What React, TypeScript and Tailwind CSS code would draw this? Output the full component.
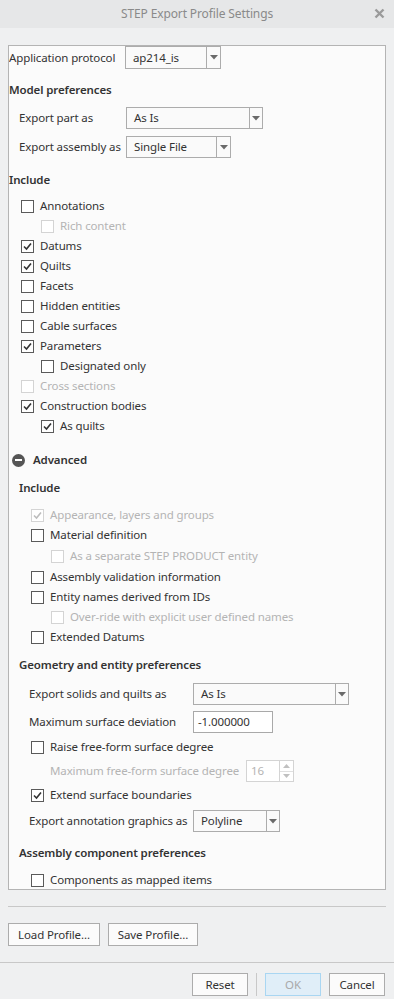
import React from "react";

const Arrow = () => (
  <svg width="8" height="5" viewBox="0 0 8 5">
    <path d="M0 0 H8 L4 4.5 Z" fill="#6a6a6a" />
  </svg>
);

function Select({ value, w, divider }: { value: string; w: number; divider: number }) {
  return (
    <div
      className="flex h-[22px] shrink-0 border border-[#acacac] bg-[#fafafa] text-[#333]"
      style={{ width: w }}
    >
      <div className="flex items-center pl-[7px]" style={{ width: divider }}>
        {value}
      </div>
      <div className="flex flex-1 items-center justify-center border-l border-[#acacac]">
        <Arrow />
      </div>
    </div>
  );
}

function Check({ checked, disabled }: { checked?: boolean; disabled?: boolean }) {
  return (
    <div
      className={
        "flex h-[13px] w-[13px] shrink-0 items-center justify-center border bg-white " +
        (disabled ? "border-[#d4d4d4]" : "border-[#5a5a5a]")
      }
    >
      {checked && (
        <svg width="11" height="11" viewBox="0 0 11 11">
          <path
            d="M2 5.5 L4.5 8 L9 2.5"
            fill="none"
            stroke={disabled ? "#bdbdbd" : "#333"}
            strokeWidth="1.6"
          />
        </svg>
      )}
    </div>
  );
}

function CRow({
  label,
  x,
  checked,
  disabled,
  h = 20,
}: {
  label: string;
  x: number;
  checked?: boolean;
  disabled?: boolean;
  h?: number;
}) {
  return (
    <div className="flex items-center whitespace-nowrap" style={{ height: h, paddingLeft: x }}>
      <Check checked={checked} disabled={disabled} />
      <span className={"ml-[6px] " + (disabled ? "text-[#b4b4b4]" : "text-[#333]")}>{label}</span>
    </div>
  );
}

function Heading({ children, x, mt }: { children: React.ReactNode; x: number; mt: number }) {
  return (
    <div
      className="flex h-[20px] items-center whitespace-nowrap font-semibold text-[#333]"
      style={{ paddingLeft: x, marginTop: mt }}
    >
      {children}
    </div>
  );
}

function Button({ children, w, ok }: { children: React.ReactNode; w: number; ok?: boolean }) {
  return (
    <div
      className={
        "flex h-[23px] items-center justify-center whitespace-nowrap border " +
        (ok ? "border-[#a9d6f2] bg-[#e0eef8] text-[#a9a9a9]" : "border-[#acacac] bg-[#fbfbfb] text-[#333]")
      }
      style={{ width: w }}
    >
      {children}
    </div>
  );
}

function Label({ w, children, muted }: { w: number; children: React.ReactNode; muted?: boolean }) {
  return (
    <span
      className={"shrink-0 whitespace-nowrap " + (muted ? "text-[#b4b4b4]" : "text-[#333]")}
      style={{ width: w }}
    >
      {children}
    </span>
  );
}

export default function App() {
  return (
    <div
      className="flex h-[999px] w-[394px] flex-col overflow-hidden bg-[#eff0f1] text-[11.5px] leading-none tracking-[-0.12px]"
      style={{ fontFamily: '"Noto Sans", "Open Sans", sans-serif' }}
    >
      {/* Title bar */}
      <div className="relative flex h-[28px] shrink-0 items-center justify-center bg-[#e6e7e8] text-[#8a8a8a]">
        <span className="text-[12px]">STEP Export Profile Settings</span>
        <span className="absolute right-[9px] top-[8px]">
          <svg width="11" height="11" viewBox="0 0 11 11">
            <path d="M1.5 1.5 L9.5 9.5 M9.5 1.5 L1.5 9.5" stroke="#9a9a9a" strokeWidth="2.4" />
          </svg>
        </span>
      </div>

      <div className="px-[8px] pt-[17px]">
        {/* Panel */}
        <div className="h-[845px] w-[378px] overflow-hidden border border-[#b4b4b4] bg-[#fbfbfb]">
          {/* App protocol */}
          <div className="flex h-[23px] items-center">
            <Label w={116}>Application protocol</Label>
            <div className="flex h-[23px] w-[96px] shrink-0 border border-[#acacac] bg-[#fafafa] text-[#333]">
              <div className="flex w-[80px] items-center pl-[7px]">ap214_is</div>
              <div className="flex flex-1 items-center justify-center border-l border-[#acacac]">
                <Arrow />
              </div>
            </div>
          </div>

          <Heading x={0} mt={11}>Model preferences</Heading>
          <div className="mt-[7px] flex h-[22px] items-center pl-[10px]">
            <Label w={107}>Export part as</Label>
            <Select value="As Is" w={137} divider={122} />
          </div>
          <div className="mt-[7px] flex h-[22px] items-center pl-[10px]">
            <Label w={107}>Export assembly as</Label>
            <Select value="Single File" w={105} divider={89} />
          </div>

          <Heading x={0} mt={12}>Include</Heading>
          <div className="mt-[6px]">
            <CRow x={12} label="Annotations" />
            <CRow x={32} label="Rich content" disabled />
            <CRow x={12} label="Datums" checked />
            <CRow x={12} label="Quilts" checked />
            <CRow x={12} label="Facets" />
            <CRow x={12} label="Hidden entities" />
            <CRow x={12} label="Cable surfaces" />
            <CRow x={12} label="Parameters" checked />
            <CRow x={32} label="Designated only" />
            <CRow x={12} label="Cross sections" disabled />
            <CRow x={12} label="Construction bodies" checked />
            <CRow x={32} label="As quilts" checked />
          </div>

          {/* Advanced */}
          <div className="mt-[14px] flex h-[20px] items-center pl-[3px] font-semibold text-[#333]">
            <div className="flex h-[13px] w-[13px] items-center justify-center rounded-full bg-[#555]">
              <div className="h-[2px] w-[7px] bg-white" />
            </div>
            <span className="ml-[8px]">Advanced</span>
          </div>

          <Heading x={10} mt={8}>Include</Heading>
          <div className="mt-[7px]">
            <CRow x={22} label="Appearance, layers and groups" checked disabled />
            <CRow x={22} label="Material definition" />
            <CRow x={42} label="As a separate STEP PRODUCT entity" disabled h={22} />
            <CRow x={22} label="Assembly validation information" />
            <CRow x={22} label="Entity names derived from IDs" />
            <CRow x={42} label="Over-ride with explicit user defined names" disabled />
            <CRow x={22} label="Extended Datums" />
          </div>

          <Heading x={10} mt={8}>Geometry and entity preferences</Heading>
          <div className="mt-[8px] flex h-[22px] items-center pl-[20px]">
            <Label w={164}>Export solids and quilts as</Label>
            <Select value="As Is" w={156} divider={141} />
          </div>
          <div className="mt-[6px] flex h-[22px] items-center pl-[20px]">
            <Label w={164}>Maximum surface deviation</Label>
            <div className="flex h-[22px] w-[80px] shrink-0 items-center border border-[#a9a9a9] bg-white pl-[4px] text-[#333]">
              -1.000000
            </div>
          </div>
          <div className="mt-[4px]">
            <CRow x={22} label="Raise free-form surface degree" />
          </div>
          <div className="mt-[3px] flex h-[22px] items-center pl-[41px]">
            <Label w={196} muted>
              Maximum free-form surface degree
            </Label>
            <div className="flex h-[22px] w-[48px] shrink-0 border border-[#d4d4d4] bg-white text-[#b4b4b4]">
              <div className="flex w-[32px] items-center pl-[4px]">16</div>
              <div className="flex flex-1 flex-col border-l border-[#d4d4d4]">
                <div className="flex flex-1 items-center justify-center border-b border-[#e0e0e0]">
                  <svg width="7" height="4" viewBox="0 0 7 4">
                    <path d="M0 4 H7 L3.5 0 Z" fill="#c0c0c0" />
                  </svg>
                </div>
                <div className="flex flex-1 items-center justify-center">
                  <svg width="7" height="4" viewBox="0 0 7 4">
                    <path d="M0 0 H7 L3.5 4 Z" fill="#c0c0c0" />
                  </svg>
                </div>
              </div>
            </div>
          </div>
          <div className="mt-[3px]">
            <CRow x={22} label="Extend surface boundaries" checked />
          </div>
          <div className="mt-[5px] flex h-[22px] items-center pl-[20px]">
            <Label w={164}>Export annotation graphics as</Label>
            <Select value="Polyline" w={87} divider={72} />
          </div>

          <Heading x={10} mt={11}>Assembly component preferences</Heading>
          <div className="mt-[7px]">
            <CRow x={22} label="Components as mapped items" />
          </div>
        </div>

        {/* separator */}
        <div className="mt-[16px] h-px w-[378px] bg-[#c8c8c8]" />

        <div className="mt-[16px] flex gap-[8px]">
          <Button w={92}>Load Profile...</Button>
          <Button w={90}>Save Profile...</Button>
        </div>
      </div>

      <div className="mt-[16px] h-px w-full bg-[#c8c8c8]" />

      <div className="mt-[10px] flex items-center pl-[192px]">
        <Button w={56}>Reset</Button>
        <div className="mx-[8px] h-[23px] w-px bg-[#c8c8c8]" />
        <Button w={56} ok>
          OK
        </Button>
        <div className="ml-[8px]">
          <Button w={56}>Cancel</Button>
        </div>
      </div>
    </div>
  );
}
